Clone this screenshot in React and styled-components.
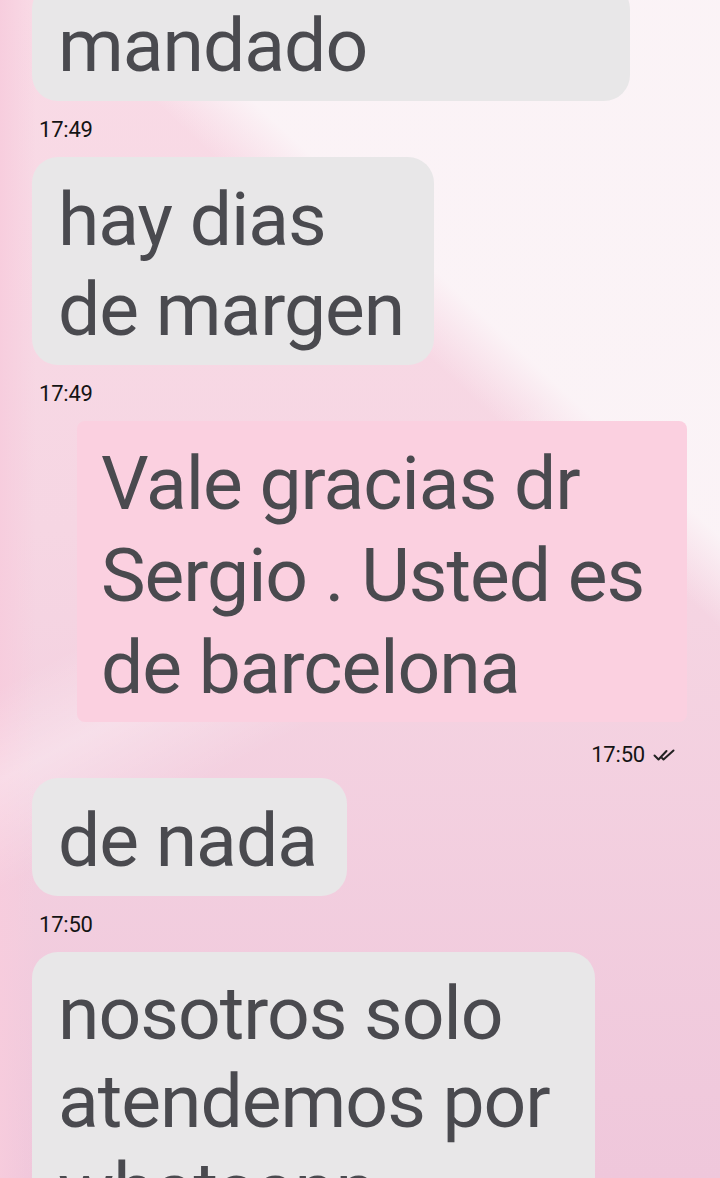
import React from "react";
import styled, { createGlobalStyle } from "styled-components";

const Global = createGlobalStyle`
  html, body { margin: 0; padding: 0; }
  body { font-family: Roboto, "Liberation Sans", Arial, sans-serif; overflow: hidden; }
`;

const Page = styled.div`
  width: 720px;
  height: 1178px;
  overflow: hidden;
  background:
    linear-gradient(43deg, rgba(251, 244, 247, 0) 66%, rgba(251, 244, 247, 0.96) 71%),
    linear-gradient(152deg, rgba(255, 255, 255, 0) 44%, rgba(255, 255, 255, 0.3) 50%, rgba(255, 255, 255, 0) 57%),
    linear-gradient(90deg, rgba(247, 204, 221, 0.9) 0px, rgba(247, 204, 221, 0) 36px),
    linear-gradient(180deg, #f9dbe6 0%, #f6d6e3 45%, #efc7db 100%);
`;

const Feed = styled.div`
  display: flex;
  flex-direction: column;
  margin-top: -17px;
`;

const Bubble = styled.div`
  align-self: ${(p) => (p.$out ? "flex-end" : "flex-start")};
  box-sizing: border-box;
  width: ${(p) => (p.$width ? `${p.$width}px` : "auto")};
  margin: ${(p) => (p.$out ? "0 33px 0 0" : "0 0 0 32px")};
  padding: ${(p) => (p.$out ? "16px 30px 9px 24px" : "17px 30px 11px 26px")};
  background: ${(p) => (p.$out ? "#fbd0e0" : "#e8e7e8")};
  border-radius: ${(p) => (p.$out ? "8px" : "26px")};
  color: #4a4a4f;
  font-family: Roboto, "Liberation Sans", Arial, sans-serif;
  font-size: 75px;
  line-height: ${(p) => p.$lh || 90}px;
  letter-spacing: -1px;
  white-space: nowrap;
`;

const Line = styled.span`
  display: block;
`;

const TimeRow = styled.div`
  display: flex;
  align-items: center;
  justify-content: ${(p) => (p.$out ? "flex-end" : "flex-start")};
  gap: 8px;
  height: 24px;
  margin: ${(p) => (p.$out ? "21px 0 11px" : "17px 0 15px")};
  padding: ${(p) => (p.$out ? "0 41px 0 0" : "0 0 0 39px")};
  color: #141414;
  font-family: Roboto, "Liberation Sans", Arial, sans-serif;
  font-size: 22px;
  line-height: 24px;
  letter-spacing: -0.2px;
`;

const Checks = () => (
  <svg width="26" height="13" viewBox="0 0 26 13" fill="none" stroke="#222" strokeWidth="2" strokeLinecap="round" strokeLinejoin="round">
    <path d="M1.5 6.5 L5.5 10.5 L13.5 2" />
    <path d="M9 9 L10.5 10.5 L20.5 1.5" />
  </svg>
);

const messages = [
  { lines: ["mandado"], time: "17:49", width: 598 },
  { lines: ["hay dias", "de margen"], time: "17:49" },
  { lines: ["Vale gracias dr", "Sergio . Usted es", "de barcelona"], time: "17:50", out: true, width: 610, lh: 92 },
  { lines: ["de nada"], time: "17:50" },
  { lines: ["nosotros solo", "atendemos por", "whatsapp"], width: 563, lh: 88 },
];

export default function App() {
  return (
    <Page>
      <Global />
      <Feed>
        {messages.map((m, i) => (
          <React.Fragment key={i}>
            <Bubble $out={m.out} $width={m.width} $lh={m.lh}>
              {m.lines.map((l) => (
                <Line key={l}>{l}</Line>
              ))}
            </Bubble>
            {m.time && (
              <TimeRow $out={m.out}>
                <span>{m.time}</span>
                {m.out && <Checks />}
              </TimeRow>
            )}
          </React.Fragment>
        ))}
      </Feed>
    </Page>
  );
}
